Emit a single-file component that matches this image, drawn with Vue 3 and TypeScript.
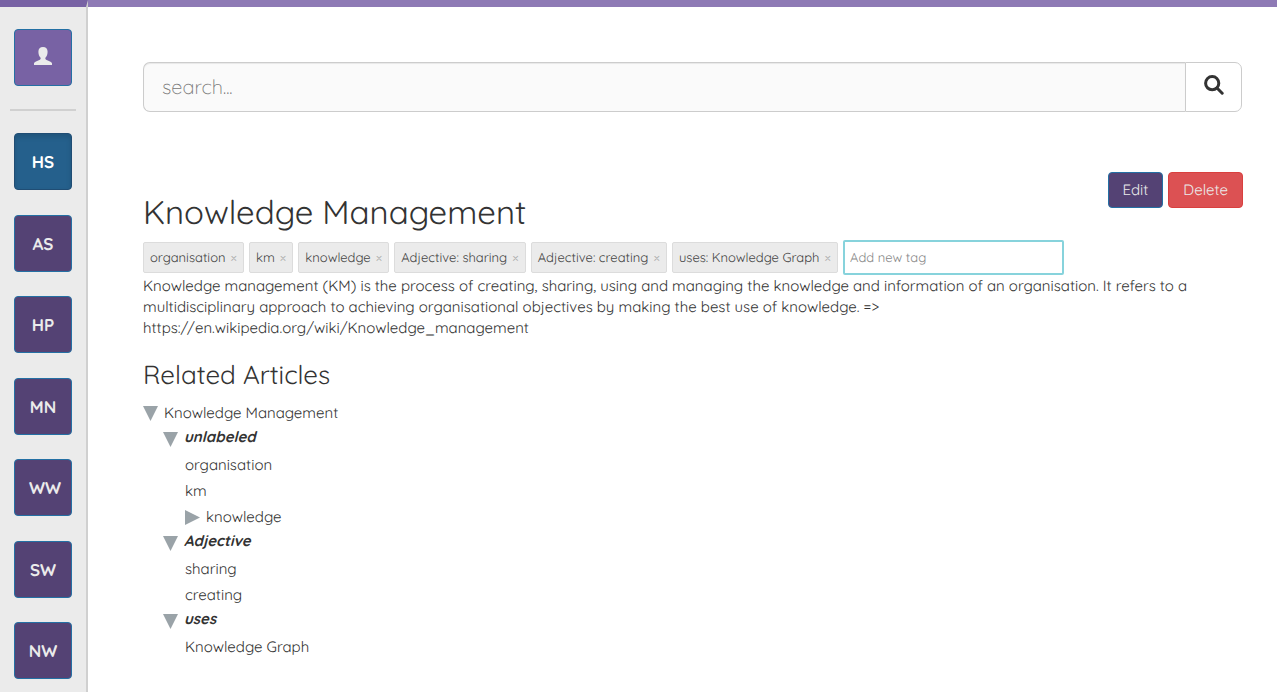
<script setup lang="ts">
import { ref } from 'vue'

interface TreeNode {
  name: string
  label?: boolean
  open?: boolean
  depth: number
}

const workspaces = ['HS', 'AS', 'HP', 'MN', 'WW', 'SW', 'NW']
const active = ref('HS')
const query = ref('')
const newTag = ref('')
const tags = ref([
  'organisation',
  'km',
  'knowledge',
  'Adjective: sharing',
  'Adjective: creating',
  'uses: Knowledge Graph',
])

const tree: TreeNode[] = [
  { name: 'Knowledge Management', depth: 0, open: true },
  { name: 'unlabeled', depth: 1, open: true, label: true },
  { name: 'organisation', depth: 2 },
  { name: 'km', depth: 2 },
  { name: 'knowledge', depth: 2, open: false },
  { name: 'Adjective', depth: 1, open: true, label: true },
  { name: 'sharing', depth: 2 },
  { name: 'creating', depth: 2 },
  { name: 'uses', depth: 1, open: true, label: true },
  { name: 'Knowledge Graph', depth: 2 },
]

function removeTag(tag: string) {
  tags.value = tags.value.filter((t) => t !== tag)
}

function addTag() {
  const value = newTag.value.trim()
  if (value && !tags.value.includes(value)) tags.value.push(value)
  newTag.value = ''
}
</script>

<template>
  <div class="page">
    <aside class="sidebar">
      <button class="tile user" type="button" aria-label="Profile">
        <svg viewBox="0 0 18 18" width="18" height="18" aria-hidden="true">
          <path
            d="M9 0C6 0 4.400 1.800 4.400 4.800c0 2.600.8 4.500 2 5.800.5.700.3 1.800-.5 2.200L2 14.500C.700 15.100 0 15.700 0 16.600V18h18v-1.400c0-.9-.7-1.500-2-2.100l-3.900-1.700c-.8-.4-1-1.500-.5-2.200 1.200-1.300 2-3.200 2-5.800C13.600 1.800 12 0 9 0z"
          />
        </svg>
      </button>
      <hr />
      <nav class="tiles" aria-label="Workspaces">
        <button
          v-for="w in workspaces"
          :key="w"
          type="button"
          class="tile"
          :class="{ active: w === active, wide: w === 'WW' }"
          @click="active = w"
        >
          {{ w }}
        </button>
      </nav>
    </aside>

    <main class="content">
      <form class="search" role="search" @submit.prevent>
        <input v-model="query" type="text" placeholder="search..." aria-label="Search" />
        <button type="submit" aria-label="Search">
          <svg viewBox="0 0 20 20" width="20" height="20" aria-hidden="true">
            <circle cx="8.200" cy="8.200" r="6.600" />
            <path d="M13 13l5.200 5.200" />
          </svg>
        </button>
      </form>

      <article>
        <div class="actions">
          <button class="btn edit" type="button">Edit</button>
          <button class="btn delete" type="button">Delete</button>
        </div>
        <h1>Knowledge Management</h1>
        <div class="tags">
          <span v-for="t in tags" :key="t" class="tag">
            {{ t }}
            <button type="button" :aria-label="`Remove ${t}`" @click="removeTag(t)">×</button>
          </span>
          <input
            v-model="newTag"
            type="text"
            placeholder="Add new tag"
            aria-label="Add new tag"
            @keydown.enter="addTag"
          />
        </div>
        <p>
          Knowledge management (KM) is the process of creating, sharing, using and managing the
          knowledge and information of an organisation. It refers to a multidisciplinary approach to
          achieving organisational objectives by making the best use of knowledge. =&gt;
          https://en.wikipedia.org/wiki/Knowledge_management
        </p>
      </article>

      <section>
        <h2>Related Articles</h2>
        <ul class="tree">
          <li v-for="(n, i) in tree" :key="i" :class="`depth-${n.depth}`">
            <svg
              v-if="n.open !== undefined"
              class="arrow"
              viewBox="0 0 15 15"
              width="15"
              height="15"
              aria-hidden="true"
            >
              <path :d="n.open ? 'M0 0h15l-7.500 15z' : 'M0 0v15l15-7.500z'" />
            </svg>
            <em v-if="n.label">{{ n.name }}</em>
            <span v-else>{{ n.name }}</span>
          </li>
        </ul>
      </section>
    </main>
  </div>
</template>

<style>
body {
  margin: 0;
  background: #fff;
}
</style>

<style scoped>
.page {
  display: flex;
  height: 100vh;
  overflow: hidden;
  color: #333;
  font-family: Quicksand, Lato, sans-serif;
  font-size: 15px;
  line-height: 21px;
  text-rendering: geometricPrecision;
}

.page *,
.page {
  box-sizing: border-box;
}

button,
input {
  font: inherit;
  margin: 0;
  text-rendering: inherit;
}

.sidebar {
  flex: none;
  width: 88px;
  padding: 22px 10px 0;
  background: #ebebeb;
  border-top: 7px solid #7862a4;
  border-right: 2px solid #d0d0d0;
}

.tile {
  display: flex;
  align-items: center;
  justify-content: center;
  width: 58px;
  height: 57px;
  padding: 2px 0 0;
  color: #ebebeb;
  background: #544274;
  border: 1px solid #2470a4;
  border-radius: 4px;
  font-size: 17px;
  font-weight: 700;
}

.user {
  margin-left: 4px;
  padding: 0 0 3px;
  background: #7862a4;
}

.user svg {
  fill: #ebebeb;
}

.active {
  color: #fff;
  background: #25608c;
  border-color: #204d74;
  box-shadow: inset 0 3px 5px rgba(0, 0, 0, 0.125);
}

.wide {
  padding-left: 4px;
}

hr {
  height: 2px;
  margin: 23px 0 22px;
  background: #d0d0d0;
  border: 0;
}

.tiles {
  display: flex;
  flex-direction: column;
  justify-content: space-between;
  min-height: 546px;
  padding-left: 4px;
}

.content {
  flex: 1;
  min-width: 0;
  padding: 55px 35px 0 55px;
  border-top: 7px solid #8e7ab5;
}

.search {
  display: flex;
  height: 50px;
}

.search input {
  flex: 1;
  min-width: 0;
  padding: 0 18px 2px;
  color: #555;
  background: #fafafa;
  border: 1px solid #ccc;
  border-right: 0;
  border-radius: 7px 0 0 7px;
  box-shadow: inset 0 1px 1px rgba(0, 0, 0, 0.075);
  font-size: 20px;
  font-weight: 300;
  outline: 0;
}

.search input::placeholder {
  color: #777;
  opacity: 1;
}

.search button {
  width: 57px;
  padding: 0 0 4px;
  background: #fff;
  border: 1px solid #ccc;
  border-radius: 0 7px 7px 0;
}

.search svg {
  display: block;
  margin: 0 auto;
  fill: none;
  stroke: #333;
  stroke-width: 3;
  stroke-linecap: round;
}

article {
  margin-top: 60px;
}

.actions {
  display: flex;
  float: right;
  gap: 5px;
  margin-right: -1px;
}

.btn {
  height: 36px;
  padding: 0 14px 2px;
  color: #ebebeb;
  border: 1px solid;
  border-radius: 4px;
  font-weight: 400;
}

.edit {
  background: #544274;
  border-color: #2470a4;
}

.delete {
  background: #dc5153;
  border-color: #d9403f;
}

h1 {
  margin: 0;
  padding-top: 21px;
  font-size: 33px;
  font-weight: 400;
  line-height: 40px;
}

.tags {
  display: flex;
  align-items: center;
  gap: 5px;
  height: 36px;
  margin-top: 6px;
  font-size: 13px;
}

.tag {
  display: flex;
  align-items: center;
  gap: 5px;
  height: 31px;
  padding: 2px 6px 0;
  color: #444;
  background: #ebebeb;
  border: 1px solid #dcdcdc;
  border-radius: 2px;
  white-space: nowrap;
}

.tag button {
  padding: 0;
  color: #aaa;
  background: none;
  border: 0;
  font-size: 14px;
}

.tags input {
  width: 221px;
  height: 35px;
  padding: 2px 5px 0;
  background: #fff;
  border: 2px solid #87d3dc;
  border-radius: 2px;
  outline: 0;
}

.tags input::placeholder {
  color: #888;
  opacity: 1;
}

p {
  margin: 0;
}

h2 {
  margin: 22px 0 0;
  font-size: 26px;
  font-weight: 400;
  line-height: 30px;
}

.tree {
  margin: 10px 0 0;
  padding: 0;
  list-style: none;
}

.tree li {
  display: flex;
  align-items: center;
  gap: 6px;
  height: 26px;
}

.tree span {
  padding-bottom: 1px;
}

.tree .depth-1 {
  padding-left: 20px;
}

.tree .depth-2 {
  padding-left: 42px;
}

.arrow {
  flex: none;
  fill: #9aa3a8;
}

em {
  padding-bottom: 6px;
  font-weight: 700;
}
</style>
